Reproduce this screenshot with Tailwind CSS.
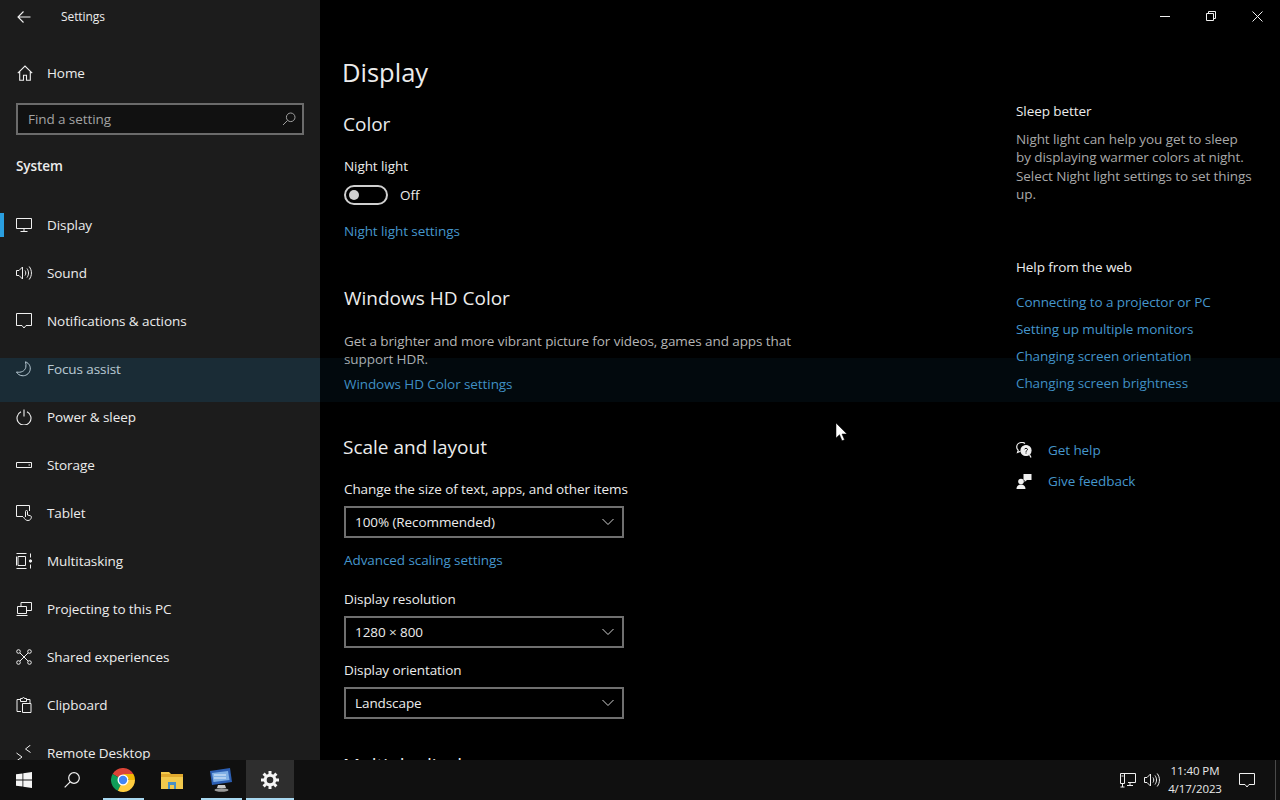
<!DOCTYPE html>
<html lang="en">
<head>
  <meta charset="UTF-8" />
  <title>Settings</title>
  <script src="https://cdn.jsdelivr.net/npm/@tailwindcss/browser@4"></script>
</head>
<body class="bg-black overflow-hidden font-['Open_Sans',sans-serif] text-[13.5px] tracking-[-0.08px] text-[#ececec]">
  <div class="relative w-[1280px] h-[800px] overflow-hidden flex flex-col">
    <div class="flex h-[760px] shrink-0 overflow-hidden">

      <!-- Sidebar -->
      <aside class="w-[320px] shrink-0 bg-[#1c1c1c] flex flex-col *:shrink-0">
        <div class="h-[34px] flex items-center">
          <svg class="ml-[17px] w-[14px] h-[14px]" viewBox="0 0 14 14" fill="none" stroke="#f0f0f0" stroke-width="1.1"><path d="M1 7h12.500M6.500 1.500 1 7l5.500 5.500"/></svg>
          <span class="ml-[30px] text-[12px]">Settings</span>
        </div>
        <div class="h-12 mt-[15px] flex items-center">
          <svg class="ml-[17px] w-[16px] h-[16px]" viewBox="0 0 16 16" fill="none" stroke="#f0f0f0" stroke-width="1.1"><path d="M.8 8.200 8 1l7.200 7.200M2.700 6.500v8.800h3.800v-5h3v5h3.800V6.500"/></svg>
          <span class="ml-[14px]">Home</span>
        </div>
        <div class="mx-4 mt-[6px] h-8 border-2 border-[#6b6b6b] bg-[#111] flex items-center justify-between px-[10px]">
          <span class="text-[#a3a3a3]">Find a setting</span>
          <svg class="w-[14px] h-[14px] -mr-[4px]" viewBox="0 0 14 14" fill="none" stroke="#a0a0a0" stroke-width="1"><circle cx="8.700" cy="5.300" r="4.300"/><path d="M5.600 8.400 1 13"/></svg>
        </div>
        <div class="ml-4 mt-[19px] h-6 leading-6 font-semibold">System</div>

        <nav class="mt-[23px] flex flex-col *:shrink-0">
          <div class="relative h-12 flex items-center">
            <div class="absolute left-0 top-[12px] w-1 h-6 bg-[#2a9fe0]"></div>
            <svg class="ml-4 w-4 h-4" viewBox="0 0 16 16" fill="none" stroke="#f0f0f0" stroke-width="1"><path d="M.5 1.500h15v10H.5zM8 11.500v3M4.500 14.500h7"/></svg>
            <span class="ml-[15px]">Display</span>
          </div>
          <div class="h-12 flex items-center">
            <svg class="ml-4 w-4 h-4" viewBox="0 0 16 16" fill="none" stroke="#f0f0f0" stroke-width="1"><path d="M.5 5.500h2.500L6.500 2v12L3 10.500H.5zM9 5.500c1 1.500 1 3.500 0 5M11 3.500c2 3 2 6 0 9M13.200 1.500c3 4 3 9 0 13"/></svg>
            <span class="ml-[15px]">Sound</span>
          </div>
          <div class="h-12 flex items-center">
            <svg class="ml-4 w-4 h-4" viewBox="0 0 16 16" fill="none" stroke="#f0f0f0" stroke-width="1"><path d="M.5.500h15v12H10L8 15l-2-2.500H.5z"/></svg>
            <span class="ml-[15px]">Notifications &amp; actions</span>
          </div>
          <div class="h-12 flex items-center">
            <svg class="ml-4 w-4 h-4" viewBox="0 0 16 16" fill="none" stroke="#f0f0f0" stroke-width="1"><path d="M9.500.8c3.800 1.500 5.500 5 4.500 8.700-1 3.500-4.500 5.700-8 5.200-2.500-.3-4.500-1.700-5.500-3.700 4.500 1 8.500-1 9.300-4.700.3-2 .2-3.800-.3-5.500z"/></svg>
            <span class="ml-[15px]">Focus assist</span>
          </div>
          <div class="h-12 flex items-center">
            <svg class="ml-4 w-4 h-4" viewBox="0 0 16 16" fill="none" stroke="#f0f0f0" stroke-width="1.100"><path d="M8 .5v7M5 2.800a7 7 0 1 0 6 0"/></svg>
            <span class="ml-[15px]">Power &amp; sleep</span>
          </div>
          <div class="h-12 flex items-center">
            <svg class="ml-4 w-4 h-4" viewBox="0 0 16 16" fill="none" stroke="#f0f0f0" stroke-width="1"><path d="M.5 5.500h15v5H.5zM12.500 8h1.500"/></svg>
            <span class="ml-[15px]">Storage</span>
          </div>
          <div class="h-12 flex items-center">
            <svg class="ml-4 w-4 h-4" viewBox="0 0 16 16" fill="none" stroke="#f0f0f0" stroke-width="1"><path d="M7 11.500H.5v-11h13V6M9.500 12V6.500a1 1 0 0 1 2 0V10l3 .8c.7.200 1 .7.900 1.400-.2 1.500-1.200 3.300-3.400 3.300-2 0-3.300-1.200-4.500-3.500"/></svg>
            <span class="ml-[15px]">Tablet</span>
          </div>
          <div class="h-12 flex items-center">
            <svg class="ml-4 w-4 h-4" viewBox="0 0 16 16" fill="none" stroke="#f0f0f0" stroke-width="1"><path d="M.5.500h10M.5 15.500h10M2 3.500h7.500v9H2zM.5 3.500v9M14.500.5v4M14.500 11.500v4"/><circle cx="14.500" cy="8" r="1.200" fill="#f0f0f0"/></svg>
            <span class="ml-[15px]">Multitasking</span>
          </div>
          <div class="h-12 flex items-center">
            <svg class="ml-4 w-4 h-4" viewBox="0 0 16 16" fill="none" stroke="#f0f0f0" stroke-width="1"><path d="M5 5V1.500h10.500v8H11M1.500 5.500h9v7h-9zM.5 14.500h11"/></svg>
            <span class="ml-[15px]">Projecting to this PC</span>
          </div>
          <div class="h-12 flex items-center">
            <svg class="ml-4 w-4 h-4" viewBox="0 0 16 16" fill="none" stroke="#f0f0f0" stroke-width="1"><circle cx="2.500" cy="2.500" r="1.800"/><circle cx="13.500" cy="2.500" r="1.800"/><circle cx="2.500" cy="13.500" r="1.800"/><circle cx="13.500" cy="13.500" r="1.800"/><path d="m4 4 8 8M12 4l-8 8"/></svg>
            <span class="ml-[15px]">Shared experiences</span>
          </div>
          <div class="h-12 flex items-center">
            <svg class="ml-4 w-4 h-4" viewBox="0 0 16 16" fill="none" stroke="#f0f0f0" stroke-width="1"><path d="M4 2.500H1v12h4M11 2.500h3V6M4.500 1.500h2a1 1 0 0 1 2 0h2v3h-6zM6.500 6.500h8.500v9H6.500z"/></svg>
            <span class="ml-[15px]">Clipboard</span>
          </div>
          <div class="h-12 flex items-center">
            <svg class="ml-4 w-4 h-4" viewBox="0 0 16 16" fill="none" stroke="#f0f0f0" stroke-width="1"><path d="M.5 8 6 12l-5.500 4M14.500 0 9.500 4l5 3.500"/></svg>
            <span class="ml-[15px]">Remote Desktop</span>
          </div>
        </nav>
      </aside>

      <!-- Content -->
      <main class="flex-1 flex pl-6 pt-[52px]">
        <section class="w-[672px] shrink-0 flex flex-col *:shrink-0">
          <h1 class="h-10 leading-10 -ml-[2px] text-[25.500px] tracking-normal">Display</h1>
          <h2 class="h-8 leading-8 mt-4 -ml-[1px] text-[19px] tracking-normal">Color</h2>
          <div class="h-6 leading-6 mt-[14px]">Night light</div>
          <div class="h-6 mt-[5px] flex items-center">
            <div class="w-[44px] h-[20px] rounded-full border-2 border-[#cfcfcf] flex items-center pl-[3px]">
              <div class="w-[10px] h-[10px] rounded-full bg-[#cfcfcf]"></div>
            </div>
            <span class="ml-3 mt-px">Off</span>
          </div>
          <a class="h-6 leading-6 mt-3 text-[#4596cc]">Night light settings</a>
          <h2 class="h-8 leading-8 mt-[39px] text-[19px] tracking-normal">Windows HD Color</h2>
          <p class="mt-[18px] w-[480px] leading-[18px] text-[#b5b5b5]">Get a brighter and more vibrant picture for videos, games and apps that support HDR.</p>
          <a class="h-6 leading-6 mt-1 text-[#4596cc]">Windows HD Color settings</a>
          <h2 class="h-8 leading-8 mt-[35px] -ml-[1px] text-[19px] tracking-normal">Scale and layout</h2>
          <div class="h-6 leading-6 mt-[14px]">Change the size of text, apps, and other items</div>
          <div class="w-[280px] h-8 mt-[5px] border-2 border-[#6f6f6f] flex items-center justify-between pl-[9px] pr-[8px]">
            <span>100% (Recommended)</span>
            <svg class="w-3 h-3" viewBox="0 0 12 12" fill="none" stroke="#d0d0d0" stroke-width="1"><path d="m.5 3 5.500 5.500L11.500 3"/></svg>
          </div>
          <a class="h-6 leading-6 mt-[10px] text-[#4596cc]">Advanced scaling settings</a>
          <div class="h-6 leading-6 mt-[15px]">Display resolution</div>
          <div class="w-[280px] h-8 mt-[5px] border-2 border-[#6f6f6f] flex items-center justify-between pl-[9px] pr-[8px]">
            <span>1280 × 800</span>
            <svg class="w-3 h-3" viewBox="0 0 12 12" fill="none" stroke="#d0d0d0" stroke-width="1"><path d="m.5 3 5.500 5.500L11.500 3"/></svg>
          </div>
          <div class="h-6 leading-6 mt-[10px]">Display orientation</div>
          <div class="w-[280px] h-8 mt-[5px] border-2 border-[#6f6f6f] flex items-center justify-between pl-[9px] pr-[8px]">
            <span>Landscape</span>
            <svg class="w-3 h-3" viewBox="0 0 12 12" fill="none" stroke="#d0d0d0" stroke-width="1"><path d="m.5 3 5.500 5.500L11.500 3"/></svg>
          </div>
          <h2 class="h-8 leading-8 mt-[30px] -ml-[1px] text-[19px] tracking-normal">Multiple displays</h2>
        </section>

        <section class="w-[240px] shrink-0 flex flex-col *:shrink-0 pt-[47px]">
          <div class="h-6 leading-6">Sleep better</div>
          <p class="mt-[7px] leading-[18.330px] text-[#a8a8a8]">Night light can help you get to sleep<br />by displaying warmer colors at night.<br />Select Night light settings to set things up.</p>
          <div class="h-6 leading-6 mt-[52px]">Help from the web</div>
          <a class="h-6 leading-6 mt-[11px] text-[#4596cc]">Connecting to a projector or PC</a>
          <a class="h-6 leading-6 mt-[3px] text-[#4596cc]">Setting up multiple monitors</a>
          <a class="h-6 leading-6 mt-[3px] text-[#4596cc]">Changing screen orientation</a>
          <a class="h-6 leading-6 mt-[3px] text-[#4596cc]">Changing screen brightness</a>
          <div class="h-6 mt-[43px] flex items-center">
            <svg class="w-4 h-4" viewBox="0 0 16 16" fill="none" stroke="#f0f0f0" stroke-width="1.200"><path d="M9 1.500C8 .8 7 .5 6 .5 3 .5.700 2.500.700 5c0 1.300.6 2.400 1.500 3.200L1.500 10.500l3-1.300"/><circle cx="10" cy="8.500" r="5" fill="#f0f0f0"/><path d="m13.500 12.500 1.500 3"/><path d="M8.500 7.300c.3-1.300 3-1.300 3 .2 0 1-1.500 1-1.500 2.200M10 10.500v1" stroke="#000" stroke-width="1"/></svg>
            <a class="ml-4 text-[#4596cc]">Get help</a>
          </div>
          <div class="h-6 mt-[7px] flex items-center">
            <svg class="w-4 h-4" viewBox="0 0 16 16" fill="#f0f0f0"><circle cx="5" cy="8.500" r="2.800"/><path d="M.5 16c0-3 1.800-4.500 4.500-4.500S9.500 13 9.500 16zM7.500 1h8v6H11l-2.500 2V7h-1z"/></svg>
            <a class="ml-4 text-[#4596cc]">Give feedback</a>
          </div>
        </section>
      </main>
    </div>

    <!-- Taskbar -->
    <footer class="h-10 shrink-0 bg-[#101010] flex items-center">
      <div class="w-12 h-10 flex items-center justify-center">
        <svg class="w-4 h-4" viewBox="0 0 16 16" fill="#f5f5f5"><path d="M0 2.300 6.500 1.400v6.200H0zM7.300 1.300 16 0v7.600H7.300zM0 8.400h6.500v6.200L0 13.700zM7.300 8.400H16V16l-8.700-1.300z"/></svg>
      </div>
      <div class="w-12 h-10 flex items-center justify-center">
        <svg class="w-4 h-4" viewBox="0 0 16 16" fill="none" stroke="#f0f0f0" stroke-width="1.200"><circle cx="10" cy="6" r="5.300"/><path d="M6.200 9.800.7 15.300"/></svg>
      </div>
      <div class="ml-[3px] relative w-[49px] h-10 flex items-center justify-center">
        <svg class="w-6 h-6 -ml-px" viewBox="0 0 24 24">
          <path d="M12 12 1.600 6A12 12 0 0 1 22.400 6z" fill="#db4437"/>
          <path d="M12 12l-5.200 10.800A12 12 0 0 1 1.600 6z" fill="#0f9d58"/>
          <path d="M12 12h12a12 12 0 0 1-17.200 10.800z" fill="#ffcd40"/>
          <path d="M12 6h10.400A12 12 0 0 1 24 12H18z" fill="#f2b705"/>
          <circle cx="12" cy="12" r="5.500" fill="#fff"/><circle cx="12" cy="12" r="4.200" fill="#4285f4"/>
        </svg>
        <div class="absolute bottom-0 left-1 right-1 h-[2px] bg-[#a8d8f0]"></div>
      </div>
      <div class="w-[49px] h-10 flex items-center justify-center">
        <svg class="w-[22px] h-[18px] -ml-px" viewBox="0 0 22 18"><path d="M0 1h8l2 2h12v15H0z" fill="#f2c94c"/><path d="M0 3h22v3H0z" fill="#e0a92e"/><path d="M7 11h8v7h-2v-4H9v4H7z" fill="#4a90c2"/></svg>
      </div>
      <div class="relative w-[49px] h-10 flex items-center justify-center">
        <svg class="w-6 h-6 -ml-px" viewBox="0 0 24 24"><path d="M1 3 21 0l2 14-20 3z" fill="#2c5fb3"/><path d="M3 5l16-2 1.500 9-16 2z" fill="#7fb0e6"/><path d="M5 7h12M5 10h12" stroke="#e6f0fa" stroke-width="1"/><path d="M9 17h7l1 3H8z" fill="#c9c9c9"/><ellipse cx="12.500" cy="22" rx="7" ry="1.800" fill="#9a9a9a"/></svg>
        <div class="absolute bottom-0 left-1 right-1 h-[2px] bg-[#a8d8f0]"></div>
      </div>
      <div class="relative w-[48px] h-10 bg-[#2e2e2e] flex items-center justify-center">
        <svg class="w-[18px] h-[18px]" viewBox="0 0 18 18" fill="none" stroke="#f5f5f5"><circle cx="9" cy="9" r="4.800" stroke-width="3"/><path d="M9 0v3.500M9 14.500V18M0 9h3.500M14.500 9H18M2.600 2.600 5 5M13 13l2.400 2.400M15.400 2.600 13 5M5 13l-2.400 2.400" stroke-width="3"/></svg>
        <div class="absolute bottom-0 left-0 right-0 h-[2px] bg-[#a8d8f0]"></div>
      </div>
      <div class="ml-auto flex items-center h-10">
        <svg class="w-[16px] h-[16px]" viewBox="0 0 16 16" fill="none" stroke="#f0f0f0" stroke-width="1"><path d="M4 1.500h11.500v9H8M7 13.500h6M10 10.500v3M.5 1.500h4v10h-4zM1.500 4h2M2.500 11.500V15M.5 15h4"/></svg>
        <svg class="ml-[8px] w-[16px] h-[16px]" viewBox="0 0 16 16" fill="none" stroke="#f0f0f0" stroke-width="1"><path d="M.5 5.500h2.500L6.500 2v12L3 10.500H.5zM9 5.500c1 1.500 1 3.500 0 5M11 3.500c2 3 2 6 0 9M13.200 1.500c3 4 3 9 0 13"/></svg>
        <div class="ml-[5px] w-[60px] flex flex-col items-center text-[11.500px] leading-[18px] text-[#e8e8e8]">
          <span>11:40 PM</span>
          <span>4/17/2023</span>
        </div>
        <svg class="ml-[14px] w-[16px] h-[16px]" viewBox="0 0 16 16" fill="none" stroke="#f0f0f0" stroke-width="1"><path d="M.5 1.500h15v11H10L8 15l-2-2.500H.5z"/></svg>
        <div class="ml-[20px] mr-[4px] w-px h-10 bg-[#4a4a4a]"></div>
      </div>
    </footer>

    <!-- highlight band that lies over both panes -->
    <div class="absolute left-0 top-[358px] w-[320px] h-[44px] bg-[#145c84]/25"></div>
    <div class="absolute left-[320px] top-[358px] w-[960px] h-[44px] bg-[#145c84]/10"></div>

    <!-- Window controls -->
    <div class="absolute top-0 right-0 flex h-8">
      <div class="w-[46px] flex items-center justify-center">
        <svg class="w-[10px] h-[10px]" viewBox="0 0 10 10" stroke="#f0f0f0" stroke-width="1"><path d="M0 5.500h10"/></svg>
      </div>
      <div class="w-[46px] flex items-center justify-center">
        <svg class="w-[10px] h-[10px]" viewBox="0 0 10 10" fill="none" stroke="#f0f0f0" stroke-width="1"><path d="M.5 2.500h7v7h-7zM2.500 2.500v-2h7v7h-2"/></svg>
      </div>
      <div class="w-[46px] flex items-center justify-center">
        <svg class="w-[11px] h-[11px]" viewBox="0 0 11 11" stroke="#f0f0f0" stroke-width="1"><path d="m.5.500 10 10M10.500.5l-10 10"/></svg>
      </div>
    </div>

    <!-- Mouse pointer -->
    <svg class="absolute left-[836px] top-[423px] w-[11px] h-[19px]" viewBox="0 0 11 19"><path d="M0 0v15l3.500-3.300 2.500 6 2.500-1-2.500-5.700H11z" fill="#fff" stroke="#000" stroke-width=".5"/></svg>
  </div>
</body>
</html>
